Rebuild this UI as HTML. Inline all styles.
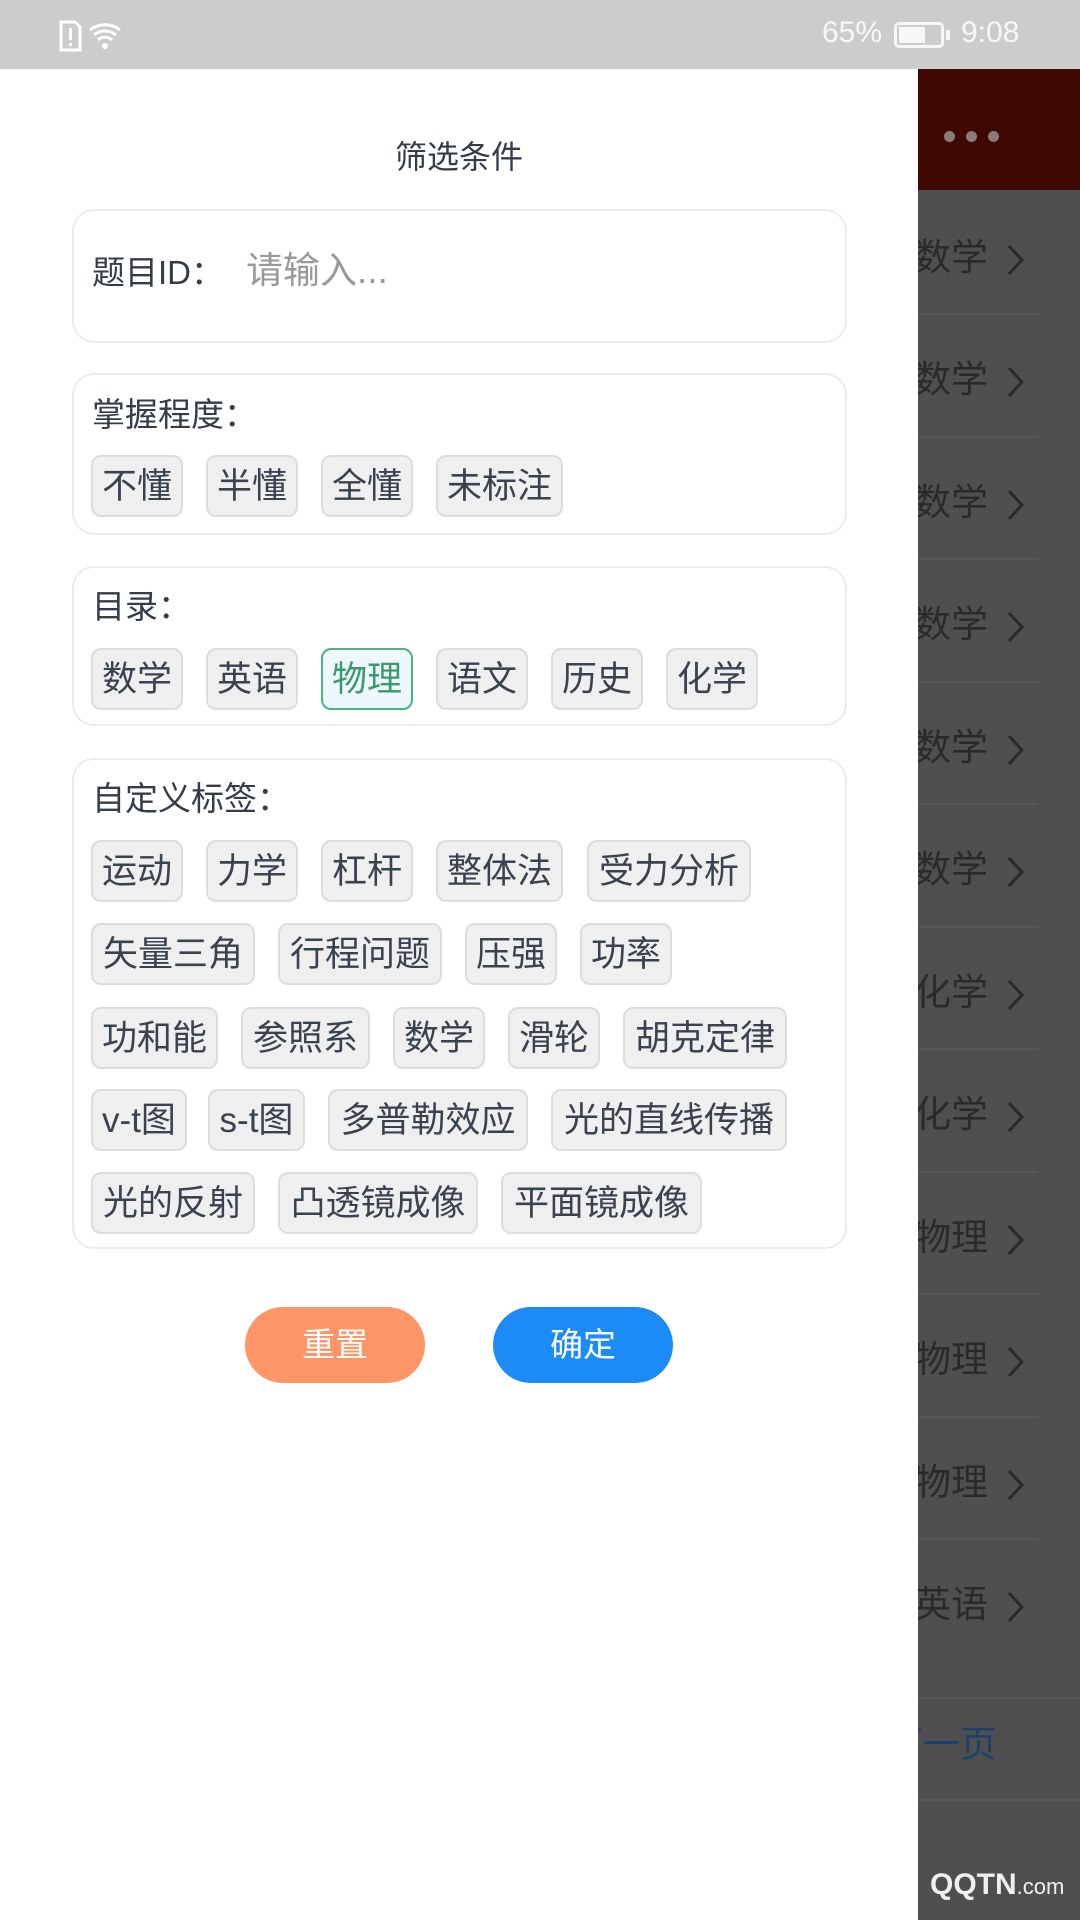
<!DOCTYPE html>
<html><head><meta charset="utf-8"><style>
*{margin:0;padding:0;box-sizing:border-box}
body{width:1080px;height:1920px;position:relative;overflow:hidden;background:#fff;font-family:"Liberation Sans","Noto Sans CJK SC",sans-serif}
.sb{position:absolute;left:0;top:0;width:1080px;height:69px;background:#cccccc}
.right{position:absolute;left:918px;top:69px;width:162px;height:1851px;background:#4f4f4f}
.hdr{position:absolute;left:918px;top:69px;width:162px;height:121px;background:#3e0903}
.dot{position:absolute;top:131px;width:11px;height:11px;border-radius:50%;background:#8a7a78}
.ri{position:absolute;left:914px;font-size:37px;color:#2a2a2a;white-space:nowrap;line-height:40px}
.ri svg{position:absolute;left:92px;top:6px}
.sep{position:absolute;left:918px;width:120px;height:2px;background:#575757}
.drawer{position:absolute;left:0;top:69px;width:918px;height:1851px;background:#fff}
.card{position:absolute;left:72px;width:775px;border:2px solid #ececec;border-radius:22px;background:#fff}
.lab{position:absolute;left:92px;font-size:33px;color:#343c48;line-height:40px;white-space:nowrap}
.c{position:absolute;height:62px;line-height:60px;text-align:center;font-size:35px;color:#3a4250;background:#efefef;border:2px solid #dcdcdc;border-radius:10px;white-space:nowrap}
.sel{background:#eef7fb;border-color:#4cb383;color:#3a9a6a}
.btn{position:absolute;top:1307px;width:180px;height:76px;border-radius:38px;color:#fff;font-size:33px;text-align:center;line-height:76px}
</style></head><body>
<div class="sb"></div>
<svg style="position:absolute;left:58px;top:20px" width="80" height="32" viewBox="0 0 80 32">
<path d="M3 2h14l5 5v23H3z" fill="none" stroke="#fff" stroke-width="3"/>
<rect x="11" y="8" width="3" height="12" fill="#fff"/><rect x="11" y="23" width="3" height="3" fill="#fff"/>
<path d="M32 10a24 24 0 0 1 30 0M36 15a17 17 0 0 1 22 0M40 20a10 10 0 0 1 14 0" fill="none" stroke="#fff" stroke-width="3"/>
<circle cx="47" cy="26" r="3" fill="#fff"/>
</svg>
<div style="position:absolute;left:822px;top:16px;font-size:30px;color:#f7f7f7">65%</div>
<div style="position:absolute;left:894px;top:22px;width:50px;height:26px;border:3px solid #f7f7f7;border-radius:5px"><div style="margin:2px;width:26px;height:16px;background:#f7f7f7"></div></div>
<div style="position:absolute;left:946px;top:30px;width:4px;height:10px;background:#f7f7f7"></div>
<div style="position:absolute;left:961px;top:16px;font-size:30px;color:#f7f7f7">9:08</div>

<div class="right"></div>
<div class="hdr"></div>
<div class="dot" style="left:944px"></div><div class="dot" style="left:966px"></div><div class="dot" style="left:988px"></div>

<div class="ri" style="top:238px">数学<svg width="20" height="32"><path d="M3 2l13 14L3 30" fill="none" stroke="#2a2a2a" stroke-width="3"/></svg></div>
<div class="sep" style="top:313px"></div>
<div class="ri" style="top:360px">数学<svg width="20" height="32"><path d="M3 2l13 14L3 30" fill="none" stroke="#2a2a2a" stroke-width="3"/></svg></div>
<div class="sep" style="top:436px"></div>
<div class="ri" style="top:483px">数学<svg width="20" height="32"><path d="M3 2l13 14L3 30" fill="none" stroke="#2a2a2a" stroke-width="3"/></svg></div>
<div class="sep" style="top:558px"></div>
<div class="ri" style="top:605px">数学<svg width="20" height="32"><path d="M3 2l13 14L3 30" fill="none" stroke="#2a2a2a" stroke-width="3"/></svg></div>
<div class="sep" style="top:681px"></div>
<div class="ri" style="top:728px">数学<svg width="20" height="32"><path d="M3 2l13 14L3 30" fill="none" stroke="#2a2a2a" stroke-width="3"/></svg></div>
<div class="sep" style="top:803px"></div>
<div class="ri" style="top:850px">数学<svg width="20" height="32"><path d="M3 2l13 14L3 30" fill="none" stroke="#2a2a2a" stroke-width="3"/></svg></div>
<div class="sep" style="top:926px"></div>
<div class="ri" style="top:973px">化学<svg width="20" height="32"><path d="M3 2l13 14L3 30" fill="none" stroke="#2a2a2a" stroke-width="3"/></svg></div>
<div class="sep" style="top:1048px"></div>
<div class="ri" style="top:1095px">化学<svg width="20" height="32"><path d="M3 2l13 14L3 30" fill="none" stroke="#2a2a2a" stroke-width="3"/></svg></div>
<div class="sep" style="top:1171px"></div>
<div class="ri" style="top:1218px">物理<svg width="20" height="32"><path d="M3 2l13 14L3 30" fill="none" stroke="#2a2a2a" stroke-width="3"/></svg></div>
<div class="sep" style="top:1293px"></div>
<div class="ri" style="top:1340px">物理<svg width="20" height="32"><path d="M3 2l13 14L3 30" fill="none" stroke="#2a2a2a" stroke-width="3"/></svg></div>
<div class="sep" style="top:1416px"></div>
<div class="ri" style="top:1463px">物理<svg width="20" height="32"><path d="M3 2l13 14L3 30" fill="none" stroke="#2a2a2a" stroke-width="3"/></svg></div>
<div class="sep" style="top:1538px"></div>
<div class="ri" style="top:1585px">英语<svg width="20" height="32"><path d="M3 2l13 14L3 30" fill="none" stroke="#2a2a2a" stroke-width="3"/></svg></div>
<div class="sep" style="top:1697px;width:162px"></div>
<div class="ri" style="top:1725px;left:886px;color:#1c4170">下一页</div>
<div class="sep" style="top:1799px;width:162px"></div>
<div style="position:absolute;left:930px;top:1868px;font-size:30px;font-weight:bold;color:#f0f0f0">QQTN<span style="font-size:22px;font-weight:normal">.com</span></div>

<div class="drawer"></div>
<div style="position:absolute;left:0;width:918px;top:137px;text-align:center;font-size:32px;color:#343c48;line-height:40px">筛选条件</div>

<div class="card" style="top:209px;height:134px"></div>
<div class="lab" style="top:253px">题目ID：</div>
<div style="position:absolute;left:246px;top:249px;font-size:37px;color:#999;line-height:44px">请输入...</div>

<div class="card" style="top:373px;height:162px"></div>
<div class="lab" style="top:395px">掌握程度：</div>
<div class="c" style="left:91px;top:455px;width:92px">不懂</div>
<div class="c" style="left:206px;top:455px;width:92px">半懂</div>
<div class="c" style="left:321px;top:455px;width:92px">全懂</div>
<div class="c" style="left:436px;top:455px;width:127px">未标注</div>

<div class="card" style="top:566px;height:160px"></div>
<div class="lab" style="top:587px">目录：</div>
<div class="c" style="left:91px;top:648px;width:92px">数学</div>
<div class="c" style="left:206px;top:648px;width:92px">英语</div>
<div class="c sel" style="left:321px;top:648px;width:92px">物理</div>
<div class="c" style="left:436px;top:648px;width:92px">语文</div>
<div class="c" style="left:551px;top:648px;width:92px">历史</div>
<div class="c" style="left:666px;top:648px;width:92px">化学</div>

<div class="card" style="top:758px;height:491px"></div>
<div class="lab" style="top:779px">自定义标签：</div>
<div class="c" style="left:91px;top:840px;width:92px">运动</div>
<div class="c" style="left:206px;top:840px;width:92px">力学</div>
<div class="c" style="left:321px;top:840px;width:92px">杠杆</div>
<div class="c" style="left:436px;top:840px;width:127px">整体法</div>
<div class="c" style="left:587px;top:840px;width:164px">受力分析</div>

<div class="c" style="left:91px;top:923px;width:164px">矢量三角</div>
<div class="c" style="left:278px;top:923px;width:164px">行程问题</div>
<div class="c" style="left:465px;top:923px;width:92px">压强</div>
<div class="c" style="left:580px;top:923px;width:92px">功率</div>

<div class="c" style="left:91px;top:1007px;width:127px">功和能</div>
<div class="c" style="left:241px;top:1007px;width:129px">参照系</div>
<div class="c" style="left:393px;top:1007px;width:92px">数学</div>
<div class="c" style="left:508px;top:1007px;width:92px">滑轮</div>
<div class="c" style="left:623px;top:1007px;width:164px">胡克定律</div>

<div class="c" style="left:91px;top:1089px;width:96px">v-t图</div>
<div class="c" style="left:208px;top:1089px;width:97px">s-t图</div>
<div class="c" style="left:328px;top:1089px;width:200px">多普勒效应</div>
<div class="c" style="left:551px;top:1089px;width:236px">光的直线传播</div>

<div class="c" style="left:91px;top:1172px;width:164px">光的反射</div>
<div class="c" style="left:278px;top:1172px;width:200px">凸透镜成像</div>
<div class="c" style="left:501px;top:1172px;width:201px">平面镜成像</div>

<div class="btn" style="left:245px;background:#fd9566">重置</div>
<div class="btn" style="left:493px;background:#1d8bf5">确定</div>
</body></html>
